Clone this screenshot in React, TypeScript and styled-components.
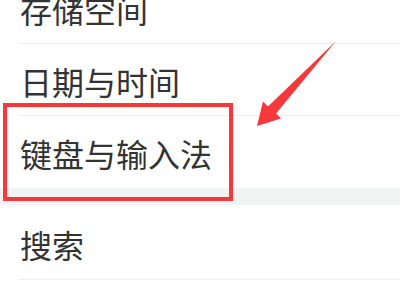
import React from "react";
import styled, { createGlobalStyle } from "styled-components";

const Global = createGlobalStyle`
  html, body { margin: 0; padding: 0; background: #ffffff; overflow: hidden; }
  body { font-family: "Noto Sans CJK SC", "Noto Sans", sans-serif; }
`;

const Page = styled.div`
  position: relative;
  width: 400px;
  height: 300px;
  overflow: hidden;
  background: #ffffff;
`;

const List = styled.div`
  display: flex;
  flex-direction: column;
  margin-top: -28px;
`;

const Row = styled.div<{ $h?: number; $divider?: boolean }>`
  height: ${(p) => p.$h ?? 72}px;
  box-sizing: border-box;
  display: flex;
  align-items: center;
  padding-left: 20px;
  position: relative;
  font-size: 32px;
  color: #333333;
  &::after {
    content: "";
    display: ${(p) => (p.$divider === false ? "none" : "block")};
    position: absolute;
    left: 19px;
    right: 0;
    bottom: 0;
    height: 1px;
    background: #eeeeee;
  }
`;

const Label = styled.span`
  line-height: 1;
  transform: translateY(1px);
`;

const SectionGap = styled.div`
  height: 17px;
  background: #f2f3f3;
`;

const Highlight = styled.div`
  position: absolute;
  left: 3px;
  top: 103px;
  width: 230px;
  height: 98px;
  box-sizing: border-box;
  border: 4px solid #f7383b;
`;

const Arrow = styled.svg`
  position: absolute;
  left: 0;
  top: 0;
  width: 400px;
  height: 300px;
  pointer-events: none;
`;

export default function App() {
  return (
    <Page>
      <Global />
      <List>
        <Row><Label>存储空间</Label></Row>
        <Row><Label>日期与时间</Label></Row>
        <Row $divider={false}><Label>键盘与输入法</Label></Row>
        <SectionGap />
        <Row $h={75}><Label>搜索</Label></Row>
      </List>
      <Highlight />
      <Arrow viewBox="0 0 400 300">
        <polygon
          points="336,41 276,113.5 281,118.5 257,126 263,101.5 268,106.5"
          fill="#f7383b"
        />
      </Arrow>
    </Page>
  );
}
